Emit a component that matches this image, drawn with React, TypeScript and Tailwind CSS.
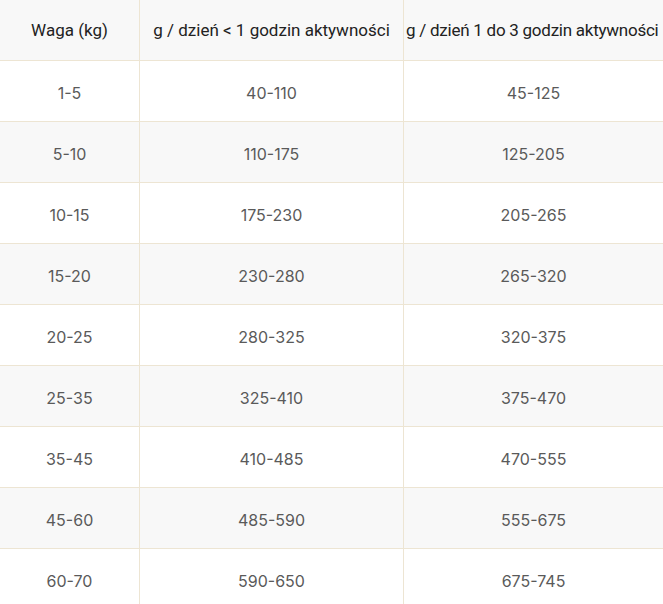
const rows = [
  ['1-5', '40-110', '45-125'],
  ['5-10', '110-175', '125-205'],
  ['10-15', '175-230', '205-265'],
  ['15-20', '230-280', '265-320'],
  ['20-25', '280-325', '320-375'],
  ['25-35', '325-410', '375-470'],
  ['35-45', '410-485', '470-555'],
  ['45-60', '485-590', '555-675'],
  ['60-70', '590-650', '675-745'],
];

export default function App() {
  return (
    <div className="w-[663px] h-[604px] overflow-hidden bg-white">
      <div className="grid grid-cols-[140px_264px_259px]">
        <div className="h-[61px] pt-[2px] flex items-center justify-center bg-[#f8f8f8] border-b border-r border-[#ede5d3] text-[17px] text-[#222] font-['Roboto',Arial,sans-serif]">
          Waga (kg)
        </div>
        <div className="h-[61px] pt-[2px] flex items-center justify-center bg-[#f8f8f8] border-b border-r border-[#ede5d3] text-[17px] text-[#222] whitespace-nowrap font-['Roboto',Arial,sans-serif]">
          g / dzień &lt; 1 godzin aktywności
        </div>
        <div className="h-[61px] pt-[2px] flex items-center pl-[2px] bg-[#f8f8f8] border-b border-[#ede5d3] text-[17px] text-[#222] whitespace-nowrap tracking-[-0.25px] font-['Roboto',Arial,sans-serif]">
          g / dzień 1 do 3 godzin aktywności
        </div>
        {rows.map((r, i) => {
          const bg = i % 2 === 1 ? 'bg-[#f8f8f8]' : 'bg-white';
          return [
            <div key={i + 'a'} className={`h-[61px] pt-[4px] flex items-center justify-center border-b border-r border-[#ede5d3] text-[16px] text-[#5a5a5a] font-['Inter',sans-serif] ${bg}`}>
              {r[0]}
            </div>,
            <div key={i + 'b'} className={`h-[61px] pt-[4px] flex items-center justify-center border-b border-r border-[#ede5d3] text-[16px] text-[#5a5a5a] font-['Inter',sans-serif] ${bg}`}>
              {r[1]}
            </div>,
            <div key={i + 'c'} className={`h-[61px] pt-[4px] flex items-center justify-center border-b border-[#ede5d3] text-[16px] text-[#5a5a5a] font-['Inter',sans-serif] ${bg}`}>
              {r[2]}
            </div>,
          ];
        })}
      </div>
    </div>
  );
}
